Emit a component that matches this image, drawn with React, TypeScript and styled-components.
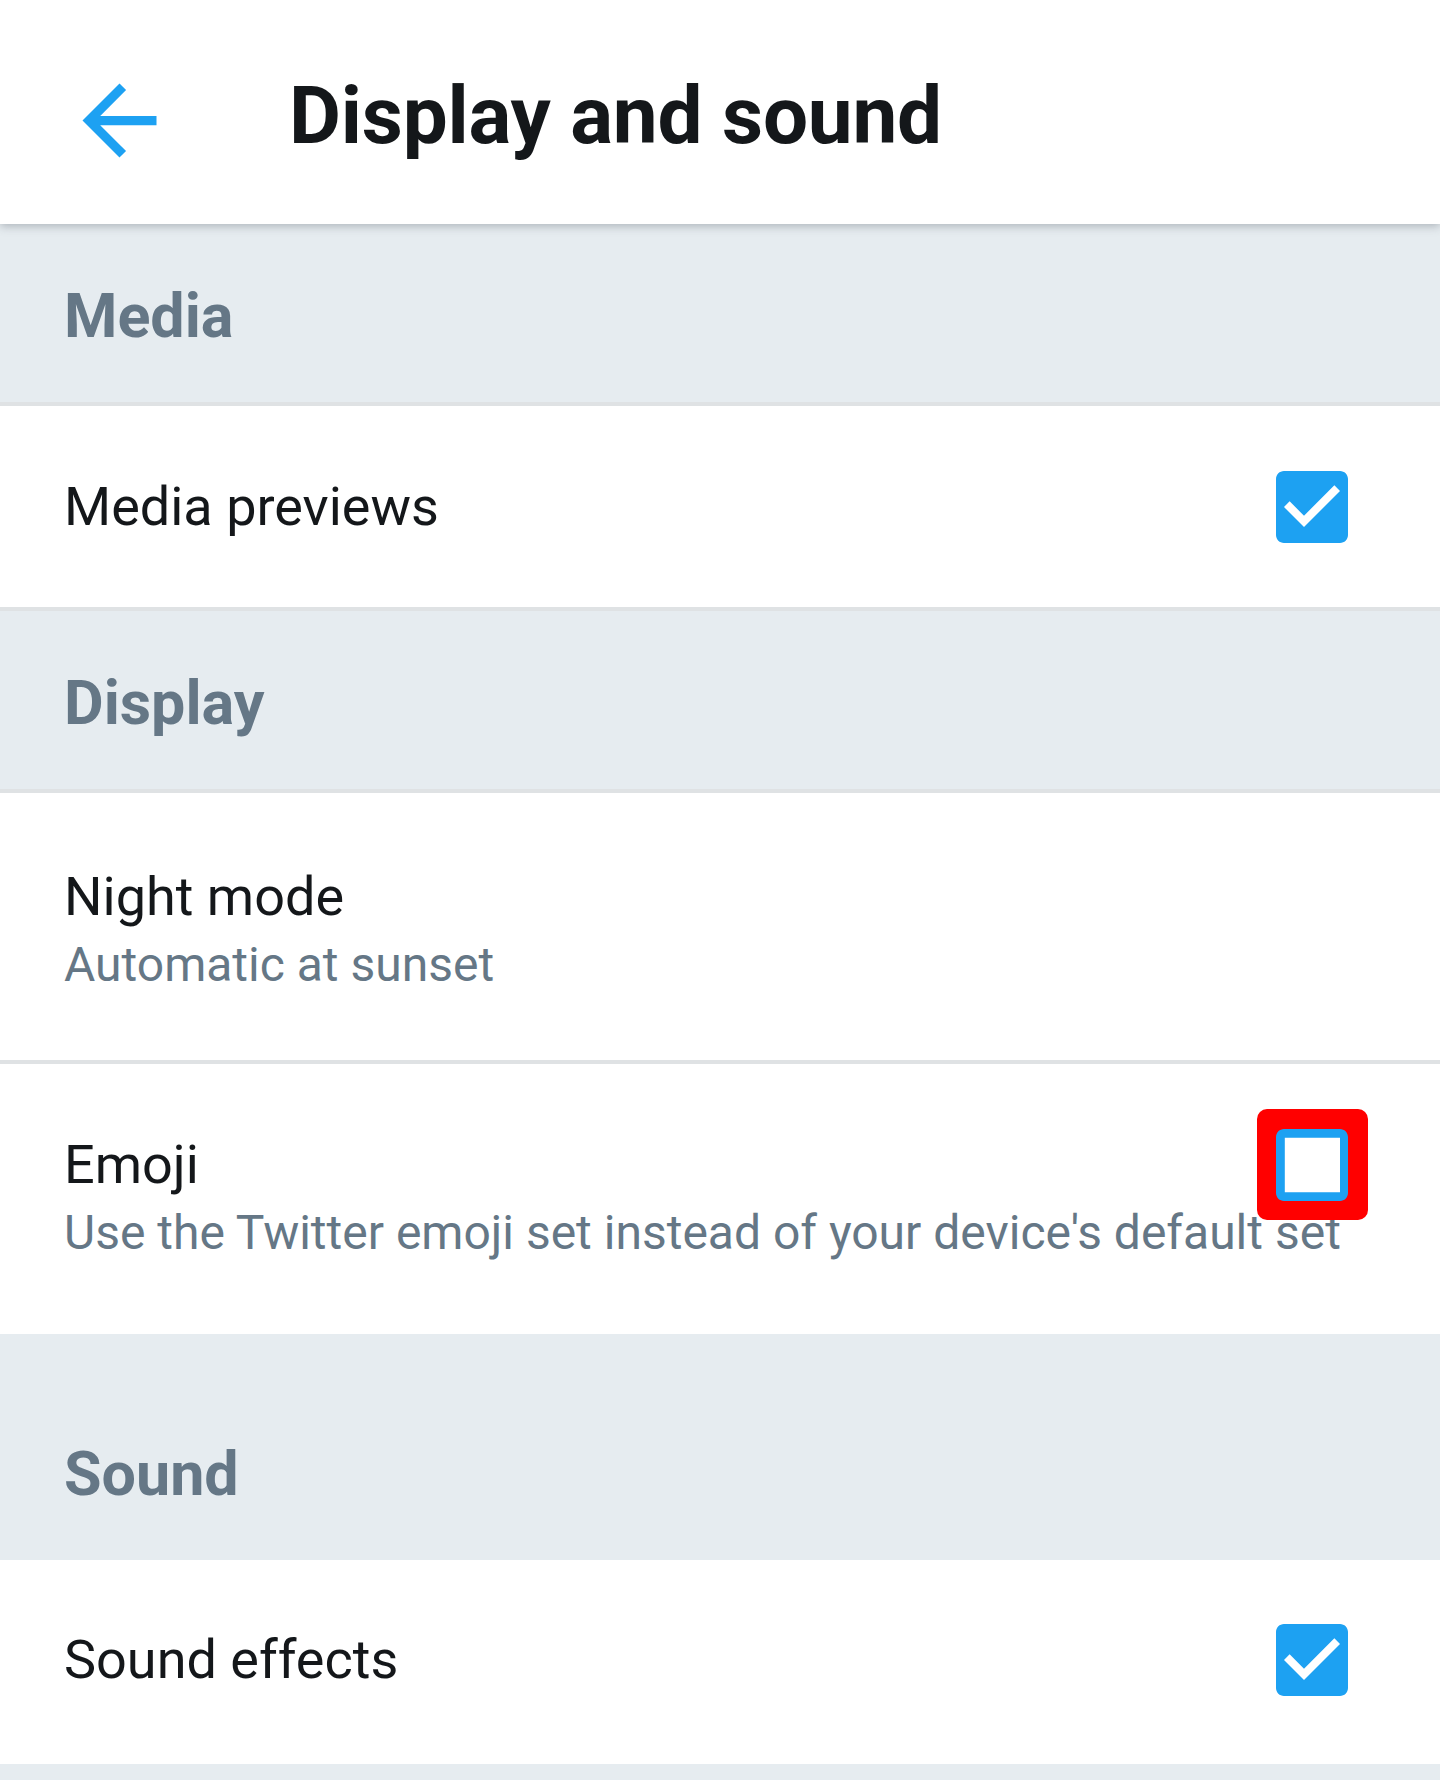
import React from "react";
import styled, { createGlobalStyle } from "styled-components";

const GlobalStyle = createGlobalStyle`
  html, body {
    margin: 0;
    padding: 0;
    background: #e6ecf0;
  }
  body {
    font-family: Roboto, "Noto Sans", "Liberation Sans", sans-serif;
    -webkit-font-smoothing: antialiased;
  }
  * { box-sizing: border-box; }
`;

const Page = styled.div`
  width: 1440px;
  min-height: 1780px;
  background: #e6ecf0;
  display: flex;
  flex-direction: column;
`;

const Header = styled.header`
  position: relative;
  z-index: 1;
  height: 224px;
  background: #ffffff;
  display: flex;
  align-items: flex-start;
  padding: 65px 0 0 64px;
  box-shadow: 0 2px 9px rgba(60, 70, 80, 0.35);
`;

const BackButton = styled.button`
  width: 111px;
  height: 111px;
  padding: 0;
  border: 0;
  background: transparent;
  display: flex;
  cursor: pointer;
  svg { display: block; }
`;

const Title = styled.h1`
  margin: 11px 0 0 114px;
  font-size: 80px;
  line-height: 80px;
  font-weight: 700;
  color: #14171a;
  letter-spacing: -0.2px;
`;

const SectionHeader = styled.div<{ $extraTop?: boolean; $bordered?: boolean }>`
  background: #e6ecf0;
  padding: ${(p) => (p.$extraTop ? "103px" : "55px")} 64px 49px;
  border-bottom: ${(p) => (p.$bordered ? "4px solid #dfe2e4" : "0")};
  font-size: 61px;
  line-height: 74px;
  font-weight: 700;
  color: #657786;
`;

const Row = styled.div<{ $bordered?: boolean; $padTop: number; $padBottom: number }>`
  background: #ffffff;
  padding: ${(p) => p.$padTop}px 92px ${(p) => p.$padBottom}px 64px;
  border-bottom: ${(p) => (p.$bordered ? "4px solid #dfe2e4" : "0")};
  display: flex;
  flex-direction: column;
  gap: 4px;
`;

const TitleLine = styled.div`
  display: flex;
  align-items: center;
  justify-content: space-between;
  min-height: 72px;
`;

const RowTitle = styled.span`
  font-size: 54px;
  line-height: 72px;
  font-weight: 400;
  color: #14171a;
`;

const RowSubtitle = styled.span`
  font-size: 48px;
  line-height: 56px;
  font-weight: 400;
  color: #657786;
  white-space: nowrap;
`;

const CheckWrap = styled.span<{ $highlight?: boolean }>`
  position: relative;
  width: 72px;
  height: 72px;
  flex: none;
  display: block;
  svg {
    position: relative;
    display: block;
    z-index: 1;
  }
  ${(p) =>
    p.$highlight
      ? `&::before {
          content: "";
          position: absolute;
          left: -19px;
          top: -20px;
          right: -20px;
          bottom: -19px;
          background: #ff0000;
          border-radius: 10px;
          z-index: 1;
        }`
      : ""}
`;

const ArrowIcon = () => (
  <svg width="111" height="111" viewBox="0 0 24 24" fill="#1da1f2">
    <path d="M20 11H7.83l5.59-5.59L12 4l-8 8 8 8 1.41-1.41L7.83 13H20v-2z" />
  </svg>
);

const Checkbox = ({ checked, highlight }: { checked: boolean; highlight?: boolean }) => (
  <CheckWrap $highlight={highlight}>
    <svg width="72" height="72" viewBox="3 3 18 18">
      {checked ? (
        <path
          fill="#1da1f2"
          d="M19 3H5c-1.11 0-2 .9-2 2v14c0 1.1.89 2 2 2h14c1.11 0 2-.9 2-2V5c0-1.1-.89-2-2-2zm-9 14l-5-5 1.41-1.41L10 14.17l7.59-7.59L19 8l-9 9z"
        />
      ) : (
        <>
          <rect x="5" y="5" width="14" height="14" fill="#ffffff" />
          <path
            fill="#1da1f2"
            d="M19 5.2v13.6H5.2V5.2h13.8m0-2.2H5c-1.1 0-2 .9-2 2v14c0 1.1.9 2 2 2h14c1.1 0 2-.9 2-2V5c0-1.1-.9-2-2-2z"
          />
        </>
      )}
    </svg>
  </CheckWrap>
);

export default function App() {
  return (
    <>
      <GlobalStyle />
      <Page>
        <Header>
          <BackButton aria-label="Back">
            <ArrowIcon />
          </BackButton>
          <Title>Display and sound</Title>
        </Header>

        <SectionHeader $bordered>Media</SectionHeader>
        <Row $bordered $padTop={65} $padBottom={64}>
          <TitleLine>
            <RowTitle>Media previews</RowTitle>
            <Checkbox checked />
          </TitleLine>
        </Row>

        <SectionHeader $bordered>Display</SectionHeader>
        <Row $bordered $padTop={68} $padBottom={67}>
          <TitleLine>
            <RowTitle>Night mode</RowTitle>
          </TitleLine>
          <RowSubtitle>Automatic at sunset</RowSubtitle>
        </Row>
        <Row $padTop={65} $padBottom={73}>
          <TitleLine>
            <RowTitle>Emoji</RowTitle>
            <Checkbox checked={false} highlight />
          </TitleLine>
          <RowSubtitle>Use the Twitter emoji set instead of your device's default set</RowSubtitle>
        </Row>

        <SectionHeader $extraTop>Sound</SectionHeader>
        <Row $padTop={64} $padBottom={68}>
          <TitleLine>
            <RowTitle>Sound effects</RowTitle>
            <Checkbox checked />
          </TitleLine>
        </Row>
      </Page>
    </>
  );
}
